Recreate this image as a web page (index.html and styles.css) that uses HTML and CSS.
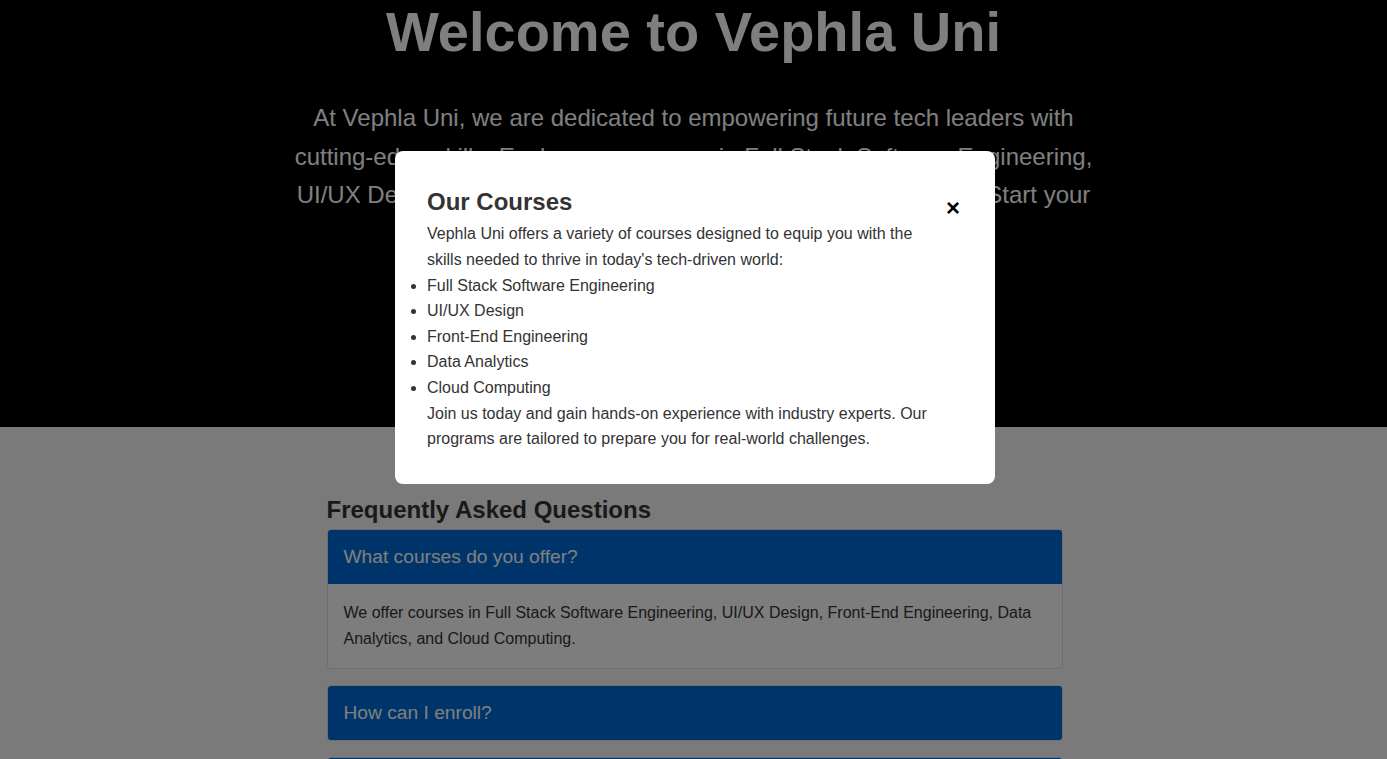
FILE: index.html
```html
<!DOCTYPE html>
<html lang="en">
<head>
<meta charset="UTF-8">
<title>Vephla Uni</title>
<link rel="stylesheet" href="styles.css">
</head>
<body>
  <header class="hero">
    <h1 class="hero-title">Welcome to Vephla Uni</h1>
    <p class="hero-text">At Vephla Uni, we are dedicated to empowering future tech leaders with cutting-edge skills. Explore our courses in Full Stack Software Engineering, UI/UX Design, Front-End, Data Analytics, and Cloud Computing. Start your journey with us today!</p>
    <button class="hero-btn" type="button">Learn More</button>
  </header>

  <section class="faq">
    <div class="faq-inner">
      <h2 class="faq-title">Frequently Asked Questions</h2>
      <div class="faq-item">
        <button class="faq-question" type="button">What courses do you offer?</button>
        <div class="faq-answer">We offer courses in Full Stack Software Engineering, UI/UX Design, Front-End Engineering, Data Analytics, and Cloud Computing.</div>
      </div>
      <div class="faq-item">
        <button class="faq-question" type="button">How can I enroll?</button>
      </div>
      <div class="faq-item">
        <button class="faq-question" type="button">Are the courses online or in person?</button>
      </div>
    </div>
  </section>

  <div class="overlay">
    <div class="modal">
      <span class="modal-close" role="button" aria-label="Close">&times;</span>
      <h2 class="modal-title">Our Courses</h2>
      <p class="modal-text">Vephla Uni offers a variety of courses designed to equip you with the skills needed to thrive in today's tech-driven world:</p>
      <ul class="modal-list">
        <li>Full Stack Software Engineering</li>
        <li>UI/UX Design</li>
        <li>Front-End Engineering</li>
        <li>Data Analytics</li>
        <li>Cloud Computing</li>
      </ul>
      <p class="modal-text">Join us today and gain hands-on experience with industry experts. Our programs are tailored to prepare you for real-world challenges.</p>
    </div>
  </div>
</body>
</html>
```

FILE: styles.css
```css
* {
  box-sizing: border-box;
}

html, body {
  margin: 0;
  padding: 0;
}

body {
  font-family: "Liberation Sans", Arial, sans-serif;
  font-size: 16px;
  line-height: 1.6;
  color: #333;
  background: #f4f4f4;
  overflow: hidden;
}

.hero {
  background: #000;
  color: #fff;
  text-align: center;
  min-height: 427px;
  padding: 0 16px;
}

.hero-title {
  margin: 0;
  font-size: 56px;
  line-height: 1.15;
  font-weight: bold;
}

.hero-text {
  max-width: 800px;
  margin: 35px auto 0;
  font-size: 24px;
  line-height: 1.6;
}

.hero-btn {
  margin-top: 40px;
  padding: 12px 28px;
  font-family: inherit;
  font-size: 18px;
  color: #fff;
  background: #006bd6;
  border: none;
  border-radius: 4px;
}

.faq {
  padding: 64px 15px 32px 17px;
}

.faq-inner {
  max-width: 736px;
  margin: 0 auto;
}

.faq-title {
  margin: 0;
  font-size: 24px;
  line-height: 1.6;
  color: #333;
}

.faq-item {
  border: 1px solid #ddd;
  border-radius: 4px;
  overflow: hidden;
  margin-bottom: 16px;
  background: #fafafa;
}

.faq-question {
  display: block;
  width: 100%;
  text-align: left;
  padding: 16px;
  font-family: inherit;
  font-size: 19.2px;
  line-height: normal;
  color: #fff;
  background: #006bd6;
  border: none;
}

.faq-answer {
  padding: 16px;
  font-size: 16px;
  line-height: 1.6;
  color: #333;
}

.overlay {
  position: fixed;
  inset: 0;
  background: rgba(0, 0, 0, 0.5);
  display: flex;
  justify-content: center;
  align-items: flex-start;
  padding-top: 151px;
}

.modal {
  width: 600px;
  margin-left: 3px;
  background: #fff;
  border-radius: 8px;
  padding: 32px;
  color: #333;
}

.modal-close {
  float: right;
  margin-top: 6px;
  margin-right: 3px;
  font-size: 24px;
  font-weight: bold;
  line-height: 1.6;
  color: #000;
  cursor: pointer;
}

.modal-title {
  margin: 0;
  font-size: 24px;
  line-height: 1.6;
  color: #333;
}

.modal-text {
  margin: 0;
}

.modal-list {
  margin: 0;
  padding-left: 0;
}
```
